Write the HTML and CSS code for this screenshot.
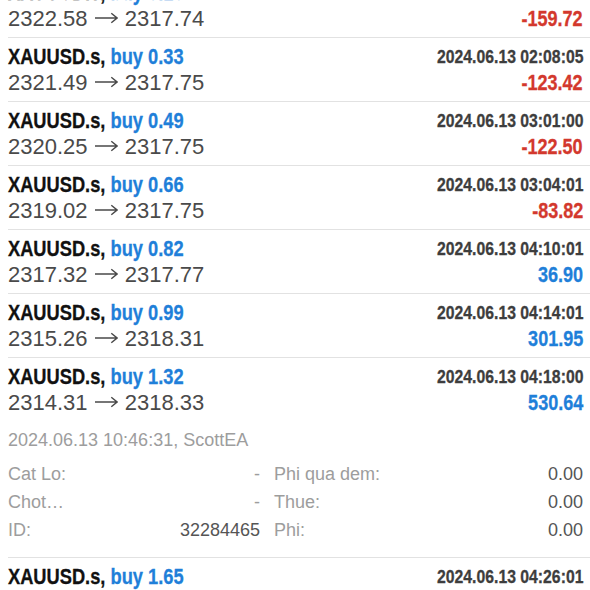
FILE: index.html
```html
<!DOCTYPE html>
<html lang="vi">

<head>
    <meta charset="UTF-8">
    <meta name="viewport" content="width=device-width, initial-scale=1.0">
    <title>Lich su giao dich</title>
    <link rel="stylesheet" href="styles.css">
</head>

<body>
    <div class="history">
        <div class="deal">
            <div class="deal-top">
                <span class="symbol">XAUUSD.s, <span class="side">buy 0.16</span></span>
                <span class="time">2024.06.13 01:58:47</span>
            </div>
            <div class="deal-bottom">
                <span class="prices">2322.58 <svg class="arrow" viewBox="0 0 24 12"><path d="M0 6H23M17 1L23 6L17 11"/></svg> 2317.74</span>
                <span class="profit loss">-159.72</span>
            </div>
        </div>

        <div class="deal">
            <div class="deal-top">
                <span class="symbol">XAUUSD.s, <span class="side">buy 0.33</span></span>
                <span class="time">2024.06.13 02:08:05</span>
            </div>
            <div class="deal-bottom">
                <span class="prices">2321.49 <svg class="arrow" viewBox="0 0 24 12"><path d="M0 6H23M17 1L23 6L17 11"/></svg> 2317.75</span>
                <span class="profit loss">-123.42</span>
            </div>
        </div>

        <div class="deal">
            <div class="deal-top">
                <span class="symbol">XAUUSD.s, <span class="side">buy 0.49</span></span>
                <span class="time">2024.06.13 03:01:00</span>
            </div>
            <div class="deal-bottom">
                <span class="prices">2320.25 <svg class="arrow" viewBox="0 0 24 12"><path d="M0 6H23M17 1L23 6L17 11"/></svg> 2317.75</span>
                <span class="profit loss">-122.50</span>
            </div>
        </div>

        <div class="deal">
            <div class="deal-top">
                <span class="symbol">XAUUSD.s, <span class="side">buy 0.66</span></span>
                <span class="time">2024.06.13 03:04:01</span>
            </div>
            <div class="deal-bottom">
                <span class="prices">2319.02 <svg class="arrow" viewBox="0 0 24 12"><path d="M0 6H23M17 1L23 6L17 11"/></svg> 2317.75</span>
                <span class="profit loss">-83.82</span>
            </div>
        </div>

        <div class="deal">
            <div class="deal-top">
                <span class="symbol">XAUUSD.s, <span class="side">buy 0.82</span></span>
                <span class="time">2024.06.13 04:10:01</span>
            </div>
            <div class="deal-bottom">
                <span class="prices">2317.32 <svg class="arrow" viewBox="0 0 24 12"><path d="M0 6H23M17 1L23 6L17 11"/></svg> 2317.77</span>
                <span class="profit gain">36.90</span>
            </div>
        </div>

        <div class="deal">
            <div class="deal-top">
                <span class="symbol">XAUUSD.s, <span class="side">buy 0.99</span></span>
                <span class="time">2024.06.13 04:14:01</span>
            </div>
            <div class="deal-bottom">
                <span class="prices">2315.26 <svg class="arrow" viewBox="0 0 24 12"><path d="M0 6H23M17 1L23 6L17 11"/></svg> 2318.31</span>
                <span class="profit gain">301.95</span>
            </div>
        </div>

        <!-- expanded deal -->
        <div class="deal open">
            <div class="deal-top">
                <span class="symbol">XAUUSD.s, <span class="side">buy 1.32</span></span>
                <span class="time">2024.06.13 04:18:00</span>
            </div>
            <div class="deal-bottom">
                <span class="prices">2314.31 <svg class="arrow" viewBox="0 0 24 12"><path d="M0 6H23M17 1L23 6L17 11"/></svg> 2318.33</span>
                <span class="profit gain">530.64</span>
            </div>

            <div class="details">
                <div class="details-head">2024.06.13 10:46:31, ScottEA</div>
                <div class="details-grid">
                    <div class="pair"><span>Cat Lo:</span><span class="dash">-</span></div>
                    <div class="pair"><span>Phi qua dem:</span><span class="val">0.00</span></div>
                    <div class="pair"><span>Chot…</span><span class="dash">-</span></div>
                    <div class="pair"><span>Thue:</span><span class="val">0.00</span></div>
                    <div class="pair"><span>ID:</span><span class="val">32284465</span></div>
                    <div class="pair"><span>Phi:</span><span class="val">0.00</span></div>
                </div>
            </div>
        </div>

        <div class="deal">
            <div class="deal-top">
                <span class="symbol">XAUUSD.s, <span class="side">buy 1.65</span></span>
                <span class="time">2024.06.13 04:26:01</span>
            </div>
            <div class="deal-bottom">
                <span class="prices">2313.86 <svg class="arrow" viewBox="0 0 24 12"><path d="M0 6H23M17 1L23 6L17 11"/></svg> 2318.35</span>
                <span class="profit gain">740.85</span>
            </div>
        </div>
    </div>
</body>

</html>
```

FILE: styles.css
```css
body {
    margin: 0;
    padding: 0;
    background: #fff;
    font-family: "Liberation Sans", Arial, sans-serif;
    overflow: hidden;
}

.history {
    margin-top: -26px;
}

.deal {
    margin-left: 8px;
    padding: 6px 7px 5px 0;
    border-bottom: 1px solid #e2e2e2;
}

.deal-top,
.deal-bottom {
    display: flex;
    justify-content: space-between;
    align-items: center;
    height: 26px;
}

/* bold condensed look: no narrow face installed, so squeeze the bold one */
.symbol,
.time,
.profit {
    display: inline-block;
    font-weight: bold;
    white-space: nowrap;
    -webkit-text-stroke: 0.3px currentColor;
}

.symbol {
    font-size: 22px;
    color: #111;
    transform: scaleX(0.83);
    transform-origin: left center;
}

.time,
.profit {
    transform-origin: right center;
}

.side {
    color: #1f7fd9;
}

.time {
    font-size: 19px;
    color: #3d3d3d;
    transform: scaleX(0.83);
}

.prices {
    font-size: 22px;
    color: #4a4a4a;
    white-space: nowrap;
}

.arrow {
    width: 23px;
    height: 12px;
    margin: 0 1px;
    vertical-align: 2px;
    fill: none;
    stroke: #4a4a4a;
    stroke-width: 1.5;
}

.profit {
    font-size: 22px;
    transform: scaleX(0.82);
}

.profit.loss {
    color: #d3382d;
}

.profit.gain {
    color: #1f7fd9;
}

/* expanded block */
.deal.open {
    padding-bottom: 13px;
}

.details {
    margin-top: 10px;
    font-size: 18px;
    line-height: 28px;
    color: #9d9d9d;
}

.details-head {
    margin-bottom: 6px;
}

.details-grid {
    display: grid;
    grid-template-columns: 252px 1fr;
    column-gap: 14px;
}

.pair {
    display: flex;
    justify-content: space-between;
}

.pair .dash {
    color: #9d9d9d;
}

.pair .val {
    color: #555;
}
```
